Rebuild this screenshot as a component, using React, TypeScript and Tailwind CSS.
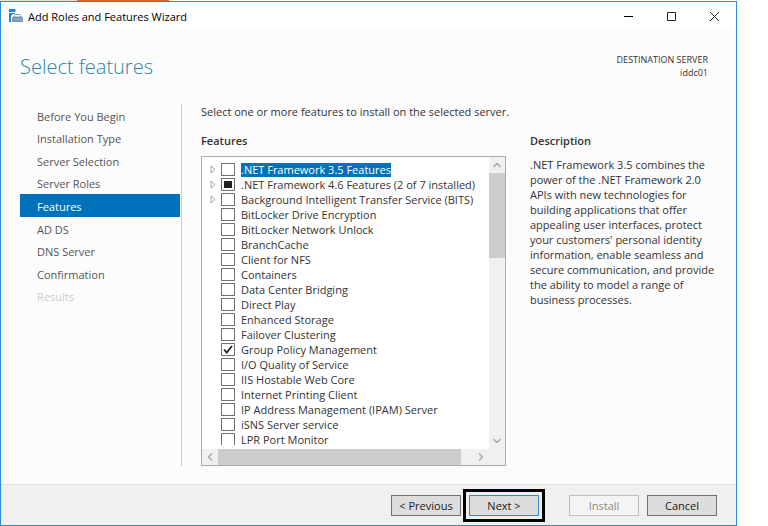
import { ChevronDown, ChevronLeft, ChevronRight, ChevronUp } from "lucide-react";
import * as React from "react";
import { clsx } from "clsx";

type CheckState = "off" | "on" | "partial";

interface Feature {
  name: string;
  state?: CheckState;
  expandable?: boolean;
}

const steps = [
  "Before You Begin",
  "Installation Type",
  "Server Selection",
  "Server Roles",
  "Features",
  "AD DS",
  "DNS Server",
  "Confirmation",
  "Results",
];

const initialFeatures: Feature[] = [
  { name: ".NET Framework 3.5 Features", expandable: true },
  {
    name: ".NET Framework 4.6 Features (2 of 7 installed)",
    expandable: true,
    state: "partial",
  },
  {
    name: "Background Intelligent Transfer Service (BITS)",
    expandable: true,
  },
  { name: "BitLocker Drive Encryption" },
  { name: "BitLocker Network Unlock" },
  { name: "BranchCache" },
  { name: "Client for NFS" },
  { name: "Containers" },
  { name: "Data Center Bridging" },
  { name: "Direct Play" },
  { name: "Enhanced Storage" },
  { name: "Failover Clustering" },
  { name: "Group Policy Management", state: "on" },
  { name: "I/O Quality of Service" },
  { name: "IIS Hostable Web Core" },
  { name: "Internet Printing Client" },
  { name: "IP Address Management (IPAM) Server" },
  { name: "iSNS Server service" },
  { name: "LPR Port Monitor" },
];

const WizardIcon = () => (
  <svg width="14" height="14" viewBox="0 0 14 14" aria-hidden="true">
    <path d="M0 0h6.5v3H0zM0 4h6v1H4L2 7v6H0z" fill="#1e88d8" />
    <path d="M5.5 8V6.5L6.5 5.5h4l1 1V8" fill="none" stroke="#6f8798" />
    <path d="M4 7.5h9l1 1V13H3V8.5z" fill="#7f97a8" />
    <path d="M3 10h4.5v1h2v-1H14" fill="none" stroke="#a9b9c4" strokeWidth=".7" />
  </svg>
);

const TitleBar = () => (
  <header className="flex h-7 items-center bg-white pl-2 text-black">
    <WizardIcon />
    <h1 className="ml-[5px] flex-1">Add Roles and Features Wizard</h1>
    <button aria-label="Minimize" className="flex w-[43px] justify-center">
      <svg width="11" height="11" viewBox="0 0 11 11">
        <path d="M1 5.5h9" stroke="#000" />
      </svg>
    </button>
    <button aria-label="Maximize" className="flex w-[43px] justify-center">
      <svg width="11" height="11" viewBox="0 0 11 11">
        <path d="M1.5 1.5h8v8h-8z" fill="none" stroke="#222" />
      </svg>
    </button>
    <button aria-label="Close" className="flex w-[43px] justify-center">
      <svg width="11" height="11" viewBox="0 0 11 11">
        <path d="M1 1l9 9M10 1l-9 9" stroke="#222" />
      </svg>
    </button>
  </header>
);

interface FeatureRowProps {
  feature: Feature;
  selected: boolean;
  onToggle: () => void;
}

const FeatureRow = ({ feature, selected, onToggle }: FeatureRowProps) => {
  const state = feature.state ?? "off";

  return (
    <li className="flex h-[15px] items-center">
      <span className="flex w-[19px] pl-2">
        {feature.expandable && (
          <svg width="6" height="9" viewBox="0 0 6 9" aria-hidden="true">
            <path d="M1 1l4 3.5L1 8z" fill="none" stroke="#a6a6a6" />
          </svg>
        )}
      </span>
      <label className="flex items-center whitespace-nowrap">
        <span className="grid place-items-center">
          <input
            type="checkbox"
            checked={state === "on"}
            onChange={onToggle}
            className="col-start-1 row-start-1 h-[13px] w-3.5 appearance-none border border-[#707070] bg-white"
          />
          {state === "partial" && (
            <span className="pointer-events-none col-start-1 row-start-1 h-[7px] w-2 bg-[#212121]" />
          )}
          {state === "on" && (
            <svg
              width="10"
              height="9"
              viewBox="0 0 10 9"
              className="pointer-events-none col-start-1 row-start-1"
            >
              <path
                d="M1 4.5L3.7 7.5L9 1"
                fill="none"
                stroke="#212121"
                strokeWidth="1.8"
              />
            </svg>
          )}
        </span>
        <span
          className={clsx(
            "ml-1.5 leading-[14px]",
            selected && "bg-[#0072bc] text-white"
          )}
        >
          {feature.name}
        </span>
      </label>
    </li>
  );
};

const FeatureList = () => {
  const [features, setFeatures] = React.useState(initialFeatures);

  const toggle = (name: string) => {
    setFeatures((list) =>
      list.map((f) =>
        f.name === name ? { ...f, state: f.state === "on" ? "off" : "on" } : f
      )
    );
  };

  return (
    <div className="flex flex-1 flex-col border border-[#acacac] bg-white">
      <div className="flex flex-1">
        <ul className="mt-[5px] mb-1 h-[283px] flex-1 overflow-hidden">
          {features.map((feature, i) => (
            <FeatureRow
              key={feature.name}
              feature={feature}
              selected={i === 0}
              onToggle={() => toggle(feature.name)}
            />
          ))}
        </ul>
        <div className="flex w-4 flex-col items-center bg-[#f0f0f0]">
          <button aria-label="Scroll up" className="py-0.5">
            <ChevronUp size={12} strokeWidth={3} color="#a0a0a0" />
          </button>
          <div className="h-[85px] w-full bg-[#cdcdcd]" />
          <div className="flex-1" />
          <button aria-label="Scroll down" className="py-0.5">
            <ChevronDown size={12} strokeWidth={3} color="#a8a8a8" />
          </button>
        </div>
      </div>
      <div className="flex h-4 items-center bg-[#f0f0f0] pr-4">
        <button aria-label="Scroll left" className="px-0.5">
          <ChevronLeft size={12} strokeWidth={3} color="#a8a8a8" />
        </button>
        <div className="h-full flex-1 bg-[#cdcdcd]" />
        <button aria-label="Scroll right" className="pr-0.5 pl-3.5">
          <ChevronRight size={12} strokeWidth={3} color="#a8a8a8" />
        </button>
      </div>
    </div>
  );
};

const buttonClass =
  "h-[21px] w-[70px] border border-[#707070] bg-[#dddddd] leading-none text-[#1a1a1a]";

export default function App() {
  return (
    <div className="flex min-h-screen flex-col bg-white pr-[31px] font-['Open_Sans','Noto_Sans',sans-serif] text-[11px] leading-[15px] text-[#333]">
      <div className="flex h-px">
        <div className="w-[77px] bg-[#e4e4e4]" />
        <div className="w-[92px] bg-[#e8642c]" />
      </div>
      <div className="flex flex-1 flex-col border border-[#2b8bd8] bg-[#fcfcfc]">
        <TitleBar />

        <div className="flex h-[74px] justify-between pr-7 pl-[19px]">
          <h2 className="pt-[21px] text-[20px] leading-8 font-light text-[#2a86a4]">
            Select features
          </h2>
          <div className="pt-[23px] text-right text-[9px] leading-[13px]">
            <p>DESTINATION SERVER</p>
            <p>iddc01</p>
          </div>
        </div>

        <main className="flex flex-1 pr-[18px] pb-[18px] pl-[19px]">
          <nav className="w-[162px] border-r border-[#cccccc] pr-px">
            <ul className="grid h-[203px] auto-rows-fr">
              {steps.map((step) => (
                <li key={step} className="flex">
                  <a
                    href="#"
                    aria-current={step === "Features" ? "step" : undefined}
                    className={clsx(
                      "flex flex-1 items-center pt-0.5 pl-[17px]",
                      step === "Features" && "bg-[#0072bc] text-white",
                      step === "Results" && "text-[#cccccc]",
                      step !== "Features" &&
                        step !== "Results" &&
                        "text-[#555]"
                    )}
                  >
                    {step}
                  </a>
                </li>
              ))}
            </ul>
          </nav>

          <section className="ml-[19px] flex flex-1 flex-col">
            <p>Select one or more features to install on the selected server.</p>
            <div className="mt-3.5 flex flex-1 gap-6">
              <div className="flex flex-1 flex-col gap-2">
                <h3 className="font-semibold">Features</h3>
                <FeatureList />
              </div>
              <div className="w-[188px]">
                <h3 className="font-semibold">Description</h3>
                <p className="mt-[9px]">
                  .NET Framework 3.5 combines the power of the .NET Framework
                  2.0 APIs with new technologies for building applications that
                  offer appealing user interfaces, protect your customers'
                  personal identity information, enable seamless and secure
                  communication, and provide the ability to model a range of
                  business processes.
                </p>
              </div>
            </div>
          </section>
        </main>

        <footer className="flex h-[41px] items-center justify-end border-t border-[#dfdfdf] bg-[#f0f0f0] pr-[19px]">
          <button className={buttonClass}>&lt; Previous</button>
          <div className="ml-0.5 border-[3px] border-black p-[3px]">
            <button className="h-[21px] w-[70px] border border-[#2b8bd8] bg-[#dddddd] leading-none text-[#1a1a1a]">
              Next &gt;
            </button>
          </div>
          <button
            disabled
            className="ml-6 h-[21px] w-[70px] border border-[#bfbfbf] bg-[#f4f4f4] leading-none text-[#8a8a8a]"
          >
            Install
          </button>
          <button className={clsx(buttonClass, "ml-2")}>Cancel</button>
        </footer>
      </div>
    </div>
  );
}
